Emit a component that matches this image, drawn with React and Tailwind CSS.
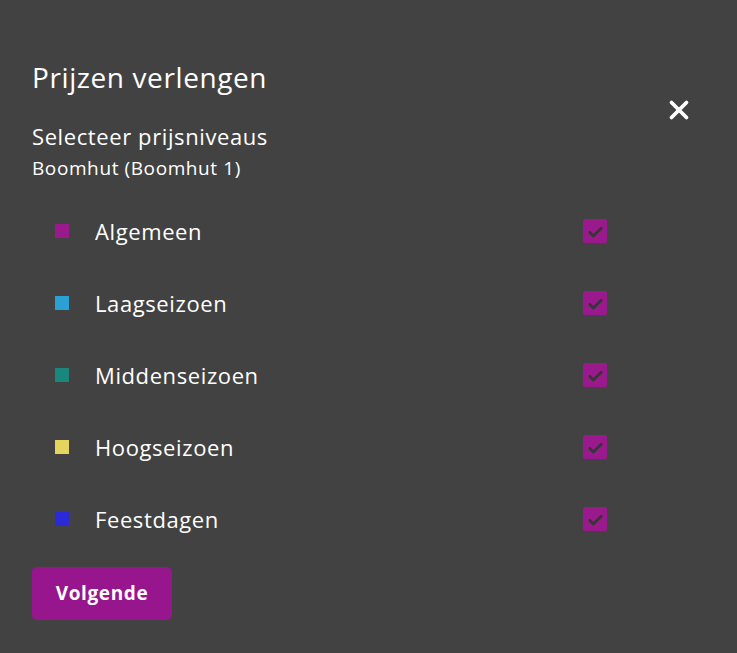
import { X, Check } from 'lucide-react';

const levels = [
    { label: 'Algemeen', color: 'bg-[#9a1a8e]' },
    { label: 'Laagseizoen', color: 'bg-[#2aa0d4]' },
    { label: 'Middenseizoen', color: 'bg-[#1a877c]' },
    { label: 'Hoogseizoen', color: 'bg-[#e3d55e]' },
    { label: 'Feestdagen', color: 'bg-[#2a2ad8]' },
];

export default function App() {
    return (
        <div
            className="min-h-[653px] w-full bg-[#424242] text-white"
            style={{ fontFamily: '"Open Sans", Lato, sans-serif' }}
        >
            <div className="px-[32px] pt-[58px]">
                <div className="flex items-start justify-between">
                    <h1 className="text-[28px] leading-[38px] tracking-[0.6px]">Prijzen verlengen</h1>
                    <button className="mr-[11px] mt-[37px] text-white">
                        <X size={30} strokeWidth={3} />
                    </button>
                </div>

                <h2 className="mt-[-4px] text-[22px] font-medium leading-[30px] tracking-[0.6px]">
                    Selecteer prijsniveaus
                </h2>
                <p className="mt-[5px] text-[19px] font-medium leading-[24px] tracking-[0.6px]">
                    Boomhut (Boomhut 1)
                </p>

                <ul className="mt-[15px]">
                    {levels.map((level) => (
                        <li
                            key={level.label}
                            className="flex h-[72px] items-center pl-[23px] pr-[98px]"
                        >
                            <span className={`h-[14px] w-[14px] ${level.color}`}></span>
                            <span className="ml-[26px] flex-1 text-[22px] font-medium tracking-[0.6px]">
                                {level.label}
                            </span>
                            <span className="flex h-[24px] w-[24px] items-center justify-center rounded-[2px] bg-[#9a1a8e]">
                                <Check size={17} strokeWidth={4} className="mt-[2px] text-[#353535]" />
                            </span>
                        </li>
                    ))}
                </ul>

                <button className="mt-[12px] h-[53px] w-[140px] rounded-[5px] bg-[#98168d] text-[19px] font-bold tracking-[0.6px]">
                    Volgende
                </button>
            </div>
        </div>
    );
}
